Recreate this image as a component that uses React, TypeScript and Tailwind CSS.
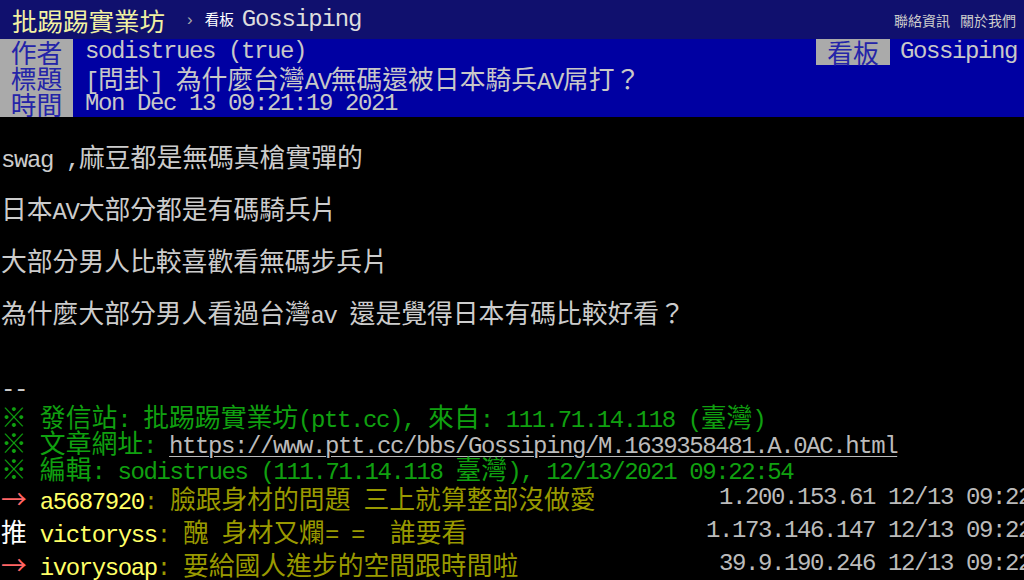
import React from "react";

const LATIN = "font-['Liberation_Mono',monospace] text-[24px] tracking-[-1.4px]";
const CJK = "font-['Noto_Sans_CJK_TC','Noto_Sans_CJK_JP',sans-serif] text-[25.8px]";

function M({ t }: { t: string }) {
  const parts = t.match(/[\x00-\x7f]+|[^\x00-\x7f]+/g) || [];
  return (
    <>
      {parts.map((p, i) =>
        /^[\x00-\x7f]/.test(p) ? (
          <span key={i} className={LATIN}>
            {p}
          </span>
        ) : (
          <span key={i} className={CJK}>
            {p}
          </span>
        )
      )}
    </>
  );
}

function MetaRow({
  tag,
  value,
  right,
}: {
  tag: string;
  value: string;
  right?: boolean;
}) {
  return (
    <div className="flex h-[26px] whitespace-pre leading-[26px]">
      <div className="h-full w-[73px] bg-[#aaaaaa] text-center text-[#2424a8]">
        <M t={tag} />
      </div>
      <div className="pl-[12px] text-[#c8c8c8]">
        <M t={value} />
      </div>
      {right && (
        <div className="ml-auto flex h-full">
          <div className="h-full w-[74px] bg-[#aaaaaa] text-center text-[#2424a8]">
            <M t="看板" />
          </div>
          <div className="pl-[10px] pr-[7px] text-[#c8c8c8]">
            <M t="Gossiping" />
          </div>
        </div>
      )}
    </div>
  );
}

function Line({ t, cls = "text-[#cccccc]" }: { t: string; cls?: string }) {
  return (
    <div className={`h-[26px] whitespace-pre leading-[26px] ${cls}`}>
      <M t={t} />
    </div>
  );
}

function Push({
  tag,
  tagCls,
  user,
  content,
  ip,
}: {
  tag: string;
  tagCls: string;
  user: string;
  content: string;
  ip: string;
}) {
  return (
    <div className="flex h-[33px] items-start whitespace-pre leading-[33px]">
      <div className="h-[33px]">
        <span className={tagCls}>
          <M t={tag} />
        </span>
        <span className="text-[#ffff66]">
          <M t={user} />
        </span>
        <span className="text-[#999900]">
          <M t={content} />
        </span>
      </div>
      <div className="ml-auto mr-[-7px] h-[33px] text-[#bbbbbb]">
        <M t={ip} />
      </div>
    </div>
  );
}

export default function App() {
  return (
    <div className="h-[580px] w-[1024px] overflow-hidden bg-black">
      <div className="flex h-[39px] items-center bg-[#10106e] pl-[12px] pr-[8px] whitespace-pre">
        <span className="font-['Noto_Sans_CJK_TC',sans-serif] text-[25.5px] leading-none text-[#f2f2a2]">
          批踢踢實業坊
        </span>
        <span className="ml-[22px] font-['Liberation_Sans',sans-serif] text-[17px] leading-none text-[#aaaaaa]">
          ›
        </span>
        <span className="ml-[12px] font-['Noto_Sans_CJK_TC',sans-serif] text-[14.5px] leading-none text-white">
          看板
        </span>
        <span className="ml-[8px] font-['Liberation_Mono',monospace] text-[24px] tracking-[-1.1px] leading-none text-[#dddddd]">
          Gossiping
        </span>
        <div className="ml-auto flex gap-[10px] font-['Noto_Sans_CJK_TC',sans-serif] text-[14px] leading-none text-[#cccccc]">
          <span>聯絡資訊</span>
          <span>關於我們</span>
        </div>
      </div>
      <div className="bg-[#0000a2]">
        <MetaRow tag="作者" value="sodistrues (true)" right />
        <MetaRow tag="標題" value="[問卦] 為什麼台灣AV無碼還被日本騎兵AV屌打？" />
        <MetaRow tag="時間" value="Mon Dec 13 09:21:19 2021" />
      </div>
      <div className="pl-[1px]">
        <Line t=" " />
        <Line t="swag ,麻豆都是無碼真槍實彈的" />
        <Line t=" " />
        <Line t="日本AV大部分都是有碼騎兵片" />
        <Line t=" " />
        <Line t="大部分男人比較喜歡看無碼步兵片" />
        <Line t=" " />
        <Line t="為什麼大部分男人看過台灣av 還是覺得日本有碼比較好看？" />
        <Line t=" " />
        <Line t=" " />
        <Line t="--" />
        <Line
          t="※ 發信站: 批踢踢實業坊(ptt.cc), 來自: 111.71.14.118 (臺灣)"
          cls="text-[#10a010]"
        />
        <div className="h-[26px] whitespace-pre leading-[26px] text-[#10a010]">
          <M t="※ 文章網址: " />
          <span className="text-[#bbbbbb] underline decoration-[#bbbbbb] underline-offset-[3px]">
            <M t="https://www.ptt.cc/bbs/Gossiping/M.1639358481.A.0AC.html" />
          </span>
        </div>
        <Line
          t="※ 編輯: sodistrues (111.71.14.118 臺灣), 12/13/2021 09:22:54"
          cls="text-[#10a010]"
        />
        <Push
          tag="→ "
          tagCls="text-[#ff6666]"
          user="a5687920"
          content=": 臉跟身材的問題 三上就算整部沒做愛"
          ip="1.200.153.61 12/13 09:22"
        />
        <Push
          tag="推 "
          tagCls="text-white"
          user="victoryss"
          content=": 醜 身材又爛= =  誰要看"
          ip="1.173.146.147 12/13 09:22"
        />
        <Push
          tag="→ "
          tagCls="text-[#ff6666]"
          user="ivorysoap"
          content=": 要給國人進步的空間跟時間啦"
          ip="39.9.190.246 12/13 09:22"
        />
      </div>
    </div>
  );
}
